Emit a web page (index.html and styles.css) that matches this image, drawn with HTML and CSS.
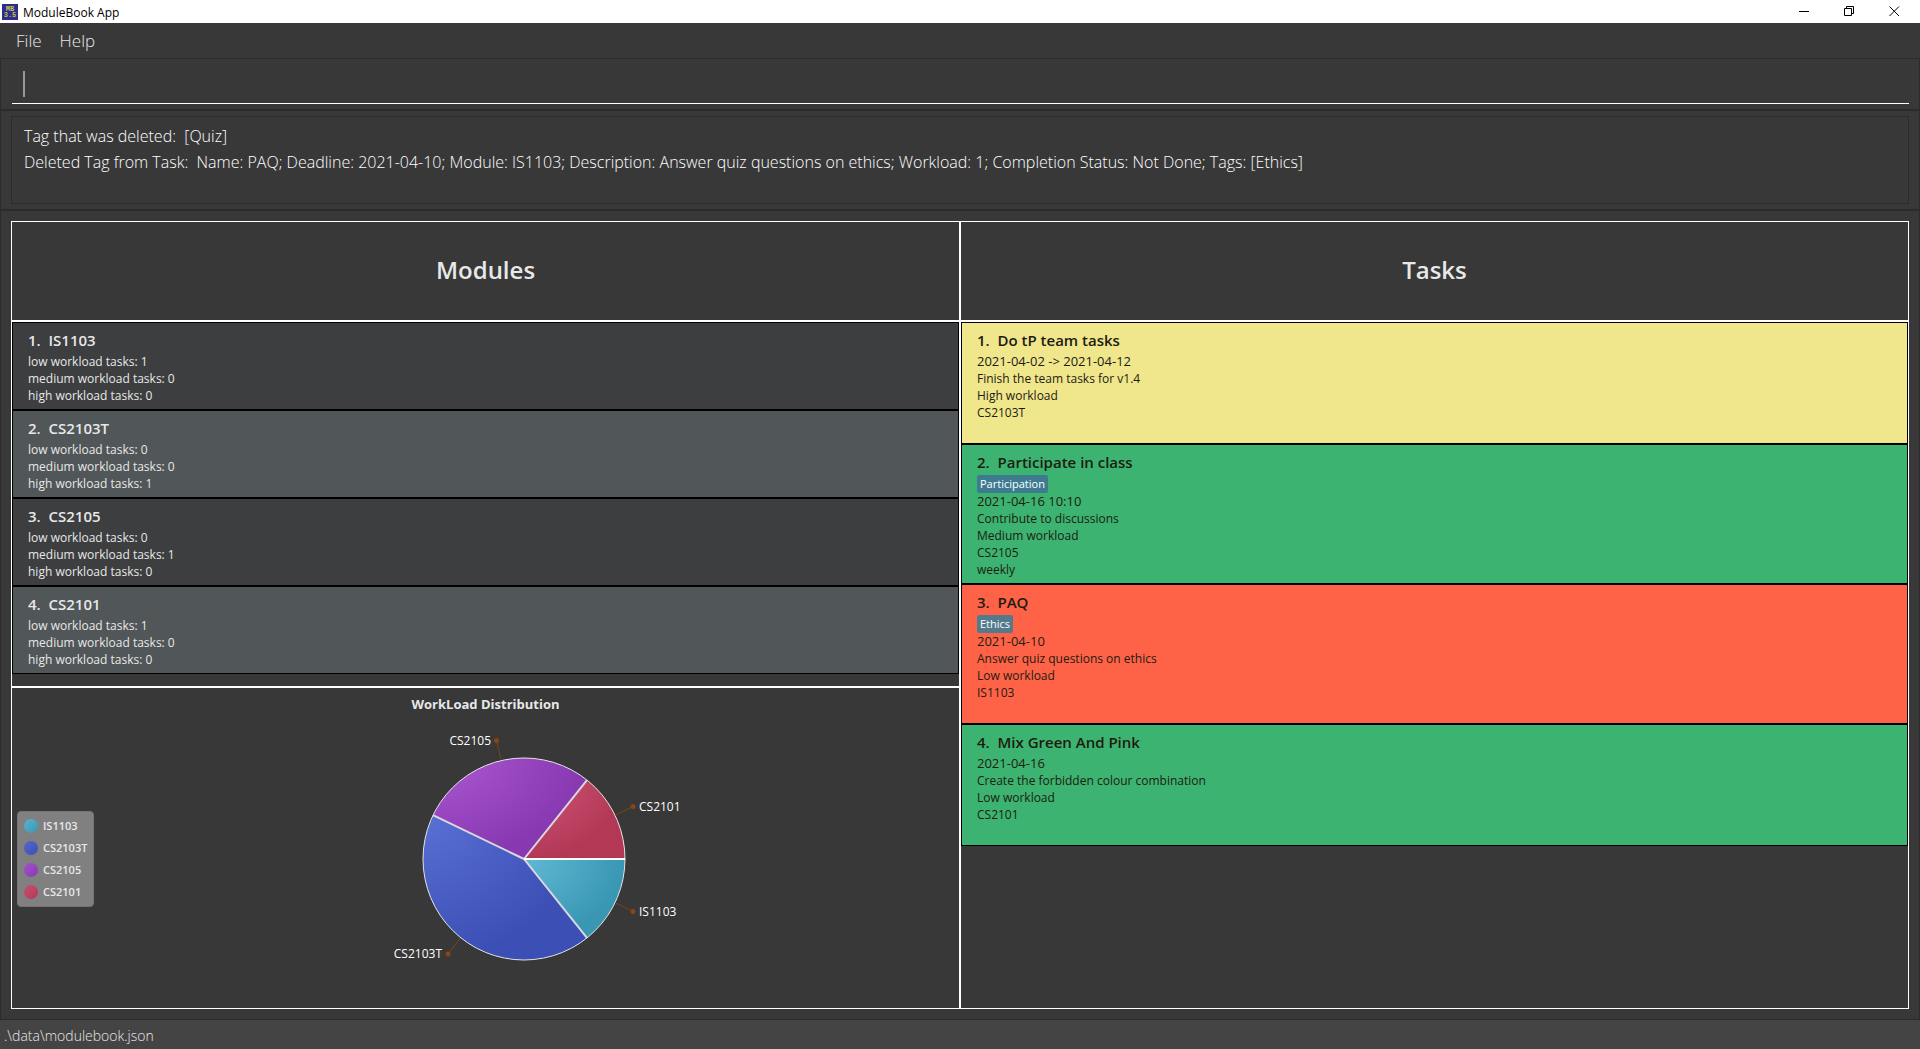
FILE: index.html
```html
<!DOCTYPE html>
<html lang="en">
<head>
<meta charset="utf-8">
<title>ModuleBook App</title>
<link rel="stylesheet" href="styles.css">
</head>
<body>
<div class="window">
  <header class="titlebar">
    <svg class="app-icon" width="16" height="16" viewBox="0 0 16 16" aria-hidden="true">
      <rect width="16" height="16" fill="#2b2e8c"/>
      <text x="8" y="7" class="app-icon-text">MB</text>
      <text x="8" y="13" class="app-icon-text">3.5</text>
    </svg>
    <span class="app-title">ModuleBook App</span>
    <div class="window-controls">
      <button type="button" aria-label="Minimize"><svg width="11" height="11" viewBox="0 0 11 11"><path d="M0 5.5H10"/></svg></button>
      <button type="button" aria-label="Restore"><svg width="11" height="11" viewBox="0 0 11 11"><path d="M.5 2.5H7.500V9.500H.5ZM2.500 2.500V.5H9.500V7.500H7.500"/></svg></button>
      <button type="button" aria-label="Close"><svg width="11" height="11" viewBox="0 0 11 11"><path d="M.5 .5L10 10M10 .5L.5 10"/></svg></button>
    </div>
  </header>

  <nav class="menubar">
    <button type="button">File</button>
    <button type="button">Help</button>
  </nav>

  <section class="pane command-pane">
    <div class="command-box">
      <span class="caret"></span>
      <input type="text" class="command-input" aria-label="Command">
    </div>
  </section>

  <section class="pane result-pane">
    <textarea class="result-display" aria-label="Result" readonly>Tag that was deleted:  [Quiz]
Deleted Tag from Task:  Name: PAQ; Deadline: 2021-04-10; Module: IS1103; Description: Answer quiz questions on ethics; Workload: 1; Completion Status: Not Done; Tags: [Ethics]</textarea>
  </section>

  <main class="pane main-pane">
    <div class="column">
      <h1 class="box column-title">Modules</h1>
      <div class="box list">
        <article class="card module">
          <h2>1.&nbsp; IS1103</h2>
          <p>low workload tasks: 1</p><p>medium workload tasks: 0</p><p>high workload tasks: 0</p>
        </article>
        <article class="card module">
          <h2>2.&nbsp; CS2103T</h2>
          <p>low workload tasks: 0</p><p>medium workload tasks: 0</p><p>high workload tasks: 1</p>
        </article>
        <article class="card module">
          <h2>3.&nbsp; CS2105</h2>
          <p>low workload tasks: 0</p><p>medium workload tasks: 1</p><p>high workload tasks: 0</p>
        </article>
        <article class="card module">
          <h2>4.&nbsp; CS2101</h2>
          <p>low workload tasks: 1</p><p>medium workload tasks: 0</p><p>high workload tasks: 0</p>
        </article>
      </div>
      <section class="box chart">
        <h2 class="chart-title">WorkLoad Distribution</h2>
        <div class="chart-body">
          <ul class="legend">
            <li><span class="dot teal"></span>IS1103</li>
            <li><span class="dot blue"></span>CS2103T</li>
            <li><span class="dot purple"></span>CS2105</li>
            <li><span class="dot red"></span>CS2101</li>
          </ul>
          <div class="plot">
            <svg class="pie" width="284" height="266" viewBox="-142 -133 284 266" role="img" aria-label="WorkLoad Distribution">
              <defs>
                <radialGradient id="g-teal" cx="0" cy="0" r="1"><stop offset="0" stop-color="#60b9d4"/><stop offset="1" stop-color="#3997b4"/></radialGradient>
                <radialGradient id="g-blue" cx="0" cy="0" r="1"><stop offset="0" stop-color="#5b70d4"/><stop offset="1" stop-color="#3b4fb5"/></radialGradient>
                <radialGradient id="g-purple" cx="0" cy="0" r="1"><stop offset="0" stop-color="#ab59d4"/><stop offset="1" stop-color="#8838b1"/></radialGradient>
                <radialGradient id="g-red" cx="0" cy="0" r="1"><stop offset="0" stop-color="#d05878"/><stop offset="1" stop-color="#b23856"/></radialGradient>
              </defs>
              <path fill="url(#g-teal)" d="M0 0L101 0A101 101 0 0 1 62.970 78.960Z"/>
              <path fill="url(#g-blue)" d="M0 0L62.970 78.960A101 101 0 0 1 -91 -43.820Z"/>
              <path fill="url(#g-purple)" d="M0 0L-91 -43.820A101 101 0 0 1 62.970 -78.960Z"/>
              <path fill="url(#g-red)" d="M0 0L62.970 -78.960A101 101 0 0 1 101 0Z"/>
              <circle class="rim" r="101"/>
              <path class="spoke" d="M0 0L62.970 78.960M0 0L-91 -43.820M0 0L62.970 -78.960"/>
              <path class="spoke bright" d="M0 0H101"/>
              <path class="leader" d="M-23 -100L-27.500 -118.500M91.500 -44L109 -52.500M91.500 44L109 52.500M-63.500 79L-76 95"/>
              <g class="knob"><circle cx="-27.500" cy="-118.500" r="2.500"/><circle cx="109" cy="-52.500" r="2.500"/><circle cx="109" cy="52.500" r="2.500"/><circle cx="-76" cy="95" r="2.500"/></g>
              <g class="labels">
                <text x="-33" y="-114" text-anchor="end">CS2105</text>
                <text x="115" y="-48">CS2101</text>
                <text x="115" y="57">IS1103</text>
                <text x="-82" y="99" text-anchor="end">CS2103T</text>
              </g>
            </svg>
          </div>
        </div>
      </section>
    </div>

    <div class="column">
      <h1 class="box column-title">Tasks</h1>
      <div class="box list">
        <article class="card task due-soon">
          <h2>1.&nbsp; Do tP team tasks</h2>
          <p class="when">2021-04-02 -&gt; 2021-04-12</p><p>Finish the team tasks for v1.4</p><p>High workload</p><p>CS2103T</p>
        </article>
        <article class="card task tagged on-track">
          <h2>2.&nbsp; Participate in class</h2>
          <span class="tag">Participation</span>
          <p class="when">2021-04-16 10:10</p><p>Contribute to discussions</p><p>Medium workload</p><p>CS2105</p><p>weekly</p>
        </article>
        <article class="card task tagged overdue">
          <h2>3.&nbsp; PAQ</h2>
          <span class="tag">Ethics</span>
          <p class="when">2021-04-10</p><p>Answer quiz questions on ethics</p><p>Low workload</p><p>IS1103</p>
        </article>
        <article class="card task on-track">
          <h2>4.&nbsp; Mix Green And Pink</h2>
          <p class="when">2021-04-16</p><p>Create the forbidden colour combination</p><p>Low workload</p><p>CS2101</p>
        </article>
      </div>
    </div>
  </main>

  <footer class="statusbar">.\data\modulebook.json</footer>
</div>
</body>
</html>
```
FILE: styles.css
```css
* { box-sizing: border-box; }

body {
  margin: 0;
  background: #383838;
  color: #e8e8e8;
  font-family: "Open Sans", "Noto Sans", sans-serif;
  font-size: 12px;
  line-height: 17px;
}

h1, h2, p, ul { margin: 0; padding: 0; }

button {
  border: 0;
  padding: 0;
  background: none;
  color: inherit;
  font: inherit;
}

.window {
  display: flex;
  flex-direction: column;
  min-height: 100vh;
}

/* Title bar */
.titlebar {
  display: flex;
  align-items: center;
  height: 23px;
  padding: 0 3px 0 2px;
  background: #fff;
  color: #000;
}

.app-icon-text {
  fill: #c9c04a;
  font: bold 7px "Liberation Mono", monospace;
  text-anchor: middle;
}

.app-title { margin-left: 5px; font-size: 12px; padding-top: 2px; }

.window-controls { display: flex; margin-left: auto; }
.window-controls button {
  display: flex;
  align-items: center;
  justify-content: center;
  width: 45px;
  height: 20px;
}
.window-controls path { fill: none; stroke: #000; }

/* Menu */
.menubar {
  display: flex;
  gap: 18px;
  height: 35px;
  padding: 0 16px;
  font-size: 17px;
  font-weight: 300;
  line-height: 35px;
}

/* Panes */
.pane { border: 1px solid #2b2b2b; }

.command-pane { padding: 5px 10px 5px 11px; }
.command-box {
  display: flex;
  align-items: center;
  height: 40px;
  padding-left: 11px;
  border-bottom: 1px solid #fff;
}
.caret { width: 2px; height: 26px; background: #999; }
.command-input {
  flex: 1;
  border: 0;
  outline: 0;
  background: none;
  color: #fff;
  font: 300 16px "Open Sans", sans-serif;
}

.result-pane { display: flex; padding: 5px 10px; }
.result-display {
  flex: 1;
  height: 88px;
  padding: 6px 12px;
  border: 1px solid #2b2b2b;
  outline: 0;
  resize: none;
  overflow: hidden;
  background: none;
  color: #fff;
  font: 300 16px/26px "Open Sans", "Noto Sans", sans-serif;
}

.main-pane {
  flex: 1;
  display: flex;
  padding: 10px;
}
.column {
  flex: 1;
  display: flex;
  flex-direction: column;
}
.box { border: 1px solid #fff; }

.column-title {
  padding: 31px 0 33px;
  text-align: center;
  font-size: 24px;
  font-weight: 600;
  line-height: 34px;
}

.list { flex: 1; }

/* Cards */
.card {
  min-height: 88px;
  padding: 7px 15px 4px;
  border: 1px solid #000;
}
.card h2 {
  margin-bottom: 3px;
  font-size: 15px;
  font-weight: 600;
  line-height: 20px;
}
.module { background: #3c3e3f; }
.module:nth-child(even) { background: #515658; }

.task { min-height: 122px; color: #1c1c10; }
.tagged { min-height: 140px; }
.when { font-size: 13px; }
.due-soon { background: #f0e68c; }
.on-track { background: #3cb371; }
.overdue { background: #ff6347; }

.tag {
  display: block;
  width: fit-content;
  padding: 0 3px;
  border-radius: 2px;
  background: #3e7b91;
  color: #fff;
  font-size: 11px;
  line-height: 18px;
}
.overdue .tag { background: #527a8c; }

/* Chart */
.chart {
  display: flex;
  flex-direction: column;
  height: 322px;
}
.chart-title {
  padding-top: 8px;
  text-align: center;
  font-size: 13px;
  font-weight: 700;
  line-height: 17px;
}
.chart-body {
  flex: 1;
  display: flex;
  align-items: center;
  padding: 0 6px 4px 5px;
}
.legend {
  display: grid;
  gap: 8px;
  padding: 7px 6px;
  border: 1px solid #747474;
  border-radius: 4px;
  background: #808080;
  font-size: 11px;
  font-weight: 600;
  line-height: 14px;
  list-style: none;
}
.legend li { display: flex; align-items: center; gap: 5px; }
.dot { width: 14px; height: 14px; border-radius: 50%; }
.teal { background: linear-gradient(135deg, #5bb3cd, #3997b4); }
.blue { background: linear-gradient(135deg, #5568cb, #3b4fb5); }
.purple { background: linear-gradient(135deg, #a352cc, #8838b1); }
.red { background: linear-gradient(135deg, #c9506f, #b23856); }

.plot { flex: 1; display: flex; justify-content: center; }
.pie { overflow: visible; }
.rim { fill: none; stroke: #e4e4e4; }
.spoke { fill: none; stroke: #dcd8e2; stroke-width: 2px; }
.bright { stroke: #fff; }
.leader { stroke: #7a431d; }
.knob { fill: #8b4513; }
.labels { fill: #fff; font-size: 12px; }

.statusbar {
  height: 29px;
  padding: 0 4px;
  background: #444;
  font-size: 14px;
  font-weight: 300;
  line-height: 32px;
}
```
